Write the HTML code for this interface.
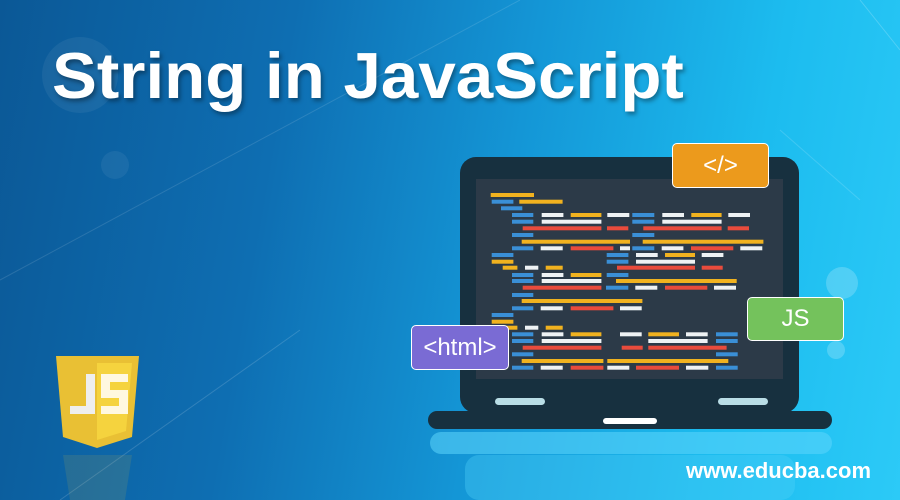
<!DOCTYPE html>
<html><head><meta charset="utf-8"><style>
html,body{margin:0;padding:0}
body{width:900px;height:500px;overflow:hidden;position:relative;font-family:"Liberation Sans",sans-serif;
background:linear-gradient(100deg,#0b5896 0%,#0e6eb2 30%,#1496d6 55%,#1cbcef 80%,#2ccaf7 100%);}
.t{position:absolute;left:52px;top:38px;font-weight:bold;font-size:65px;color:#fff;white-space:nowrap;transform:scaleX(1.035);transform-origin:left top;text-shadow:2px 3px 4px rgba(0,0,0,.35)}
.w{position:absolute;left:686px;top:458px;font-weight:bold;font-size:22px;color:#fff;white-space:nowrap}
.tag{position:absolute;border:1.5px solid #fff;border-radius:5px;color:#fff;display:flex;align-items:center;justify-content:center;font-size:24px;box-sizing:border-box}
</style></head><body>
<svg width="900" height="500" style="position:absolute;left:0;top:0">
<circle cx="80" cy="75" r="38" fill="#fff" opacity=".06"/>
<circle cx="115" cy="165" r="14" fill="#fff" opacity=".06"/>
<circle cx="842" cy="283" r="16" fill="#fff" opacity=".2"/>
<circle cx="836" cy="350" r="9" fill="#fff" opacity=".2"/>
<line x1="0" y1="280" x2="520" y2="0" stroke="#fff" stroke-opacity=".12"/>
<line x1="60" y1="500" x2="300" y2="330" stroke="#fff" stroke-opacity=".15"/>
<line x1="860" y1="0" x2="900" y2="50" stroke="#fff" stroke-opacity=".2"/>
<line x1="780" y1="130" x2="860" y2="200" stroke="#fff" stroke-opacity=".15"/>
<rect x="430" y="432" width="402" height="22" rx="11" fill="#5cd6fb" opacity=".55"/>
<rect x="465" y="455" width="330" height="45" rx="14" fill="#4fd0f8" opacity=".35"/>
<rect x="460" y="157" width="339" height="256" rx="16" fill="#17303f"/>
<rect x="476" y="179" width="307" height="200" fill="#2c3a48"/>
<rect x="495" y="398" width="50" height="7" rx="3.5" fill="#b9dde6"/>
<rect x="718" y="398" width="50" height="7" rx="3.5" fill="#b9dde6"/>
<rect x="428" y="411" width="404" height="18" rx="9" fill="#17303f"/>
<rect x="603" y="418" width="54" height="6" rx="3" fill="#fff"/>
<g id="code"></g>
<polygon points="56,356 139,356 132,437 97,448 63,437" fill="#e9c034"/>
<polygon points="97,363 132,363 126,431 97,440" fill="#f5d33e"/>
<path d="M86,374 h9 v40 h-25 v-8 h16 z" fill="#eee"/>
<path d="M101,374 h27 v8 h-18 v8 h18 v24 h-27 v-8 h18 v-8 h-18 z" fill="#fff8e0"/>
<polygon points="63,455 132,455 125,500 70,500" fill="#e9c034" opacity=".12"/>
</svg>
<div class="t">String in JavaScript</div>
<div class="tag" style="left:672px;top:143px;width:97px;height:45px;background:#ec9a1c">&lt;/&gt;</div>
<div class="tag" style="left:747px;top:297px;width:97px;height:44px;background:#74c25c">JS</div>
<div class="tag" style="left:411px;top:325px;width:98px;height:45px;background:#7a6bd4">&lt;html&gt;</div>
<div class="w">www.educba.com</div>
<script>
var C={Y:"#f1b21f",B:"#3a8fd6",W:"#eef2f4",R:"#e94b3c"};
var ys=[195,215,235,255,275,295,315,335,355,375,395,413,435,453,473,495,513,535,555,575,593,613,633,653,673,693,713];
var rows=[
"Y272-402","B275-340 Y358-488","B303-367",
"B336-400 W425-490 Y512-604 W622-688 B697-763 W787-852 Y874-965 W985-1050",
"B336-400 W425-604 B697-763 W787-965",
"R368-604 R621-685 R730-965 R983-1047",
"B336-400 B697-763",
"Y365-690 Y728-1090",
"B336-400 W422-488 R512-640 W660-690 B697-763 W785-850 R873-1000 W1021-1087",
"B275-340 B620-685 W708-773 Y795-885 W905-970",
"Y275-340 B620-685 W708-885",
"Y308-352 W375-415 Y437-488 R651-885 R905-968",
"B336-400 W425-490 Y512-604 B620-685",
"B336-400 W425-604 Y648-1010",
"R368-604 B618-685 W706-772 R795-922 W942-1008",
"B336-400","Y365-727",
"B336-400 W422-488 R512-640 W660-725",
"B275-340","Y275-340","Y308-352 W375-415 Y437-488",
"B336-400 W425-490 Y512-604 W660-725 Y745-837 W858-923 B948-1013",
"B336-400 W425-604 W745-923 B948-1013",
"R368-604 R665-728 R745-980",
"B336-400 B948-1013",
"Y365-610 Y622-985",
"B336-400 W422-488 R512-610 W622-688 R708-837 W858-925 B948-1013"];
var s="";
rows.forEach(function(r,i){var y=130+ys[i]/3-2;r.split(" ").forEach(function(b){var c=C[b[0]];var p=b.slice(1).split("-");var x1=400+ +p[0]/3,x2=400+ +p[1]/3;s+='<rect x="'+x1.toFixed(1)+'" y="'+y.toFixed(1)+'" width="'+(x2-x1).toFixed(1)+'" height="4" fill="'+c+'"/>';});});
document.getElementById("code").innerHTML=s;
</script>
</body></html>
